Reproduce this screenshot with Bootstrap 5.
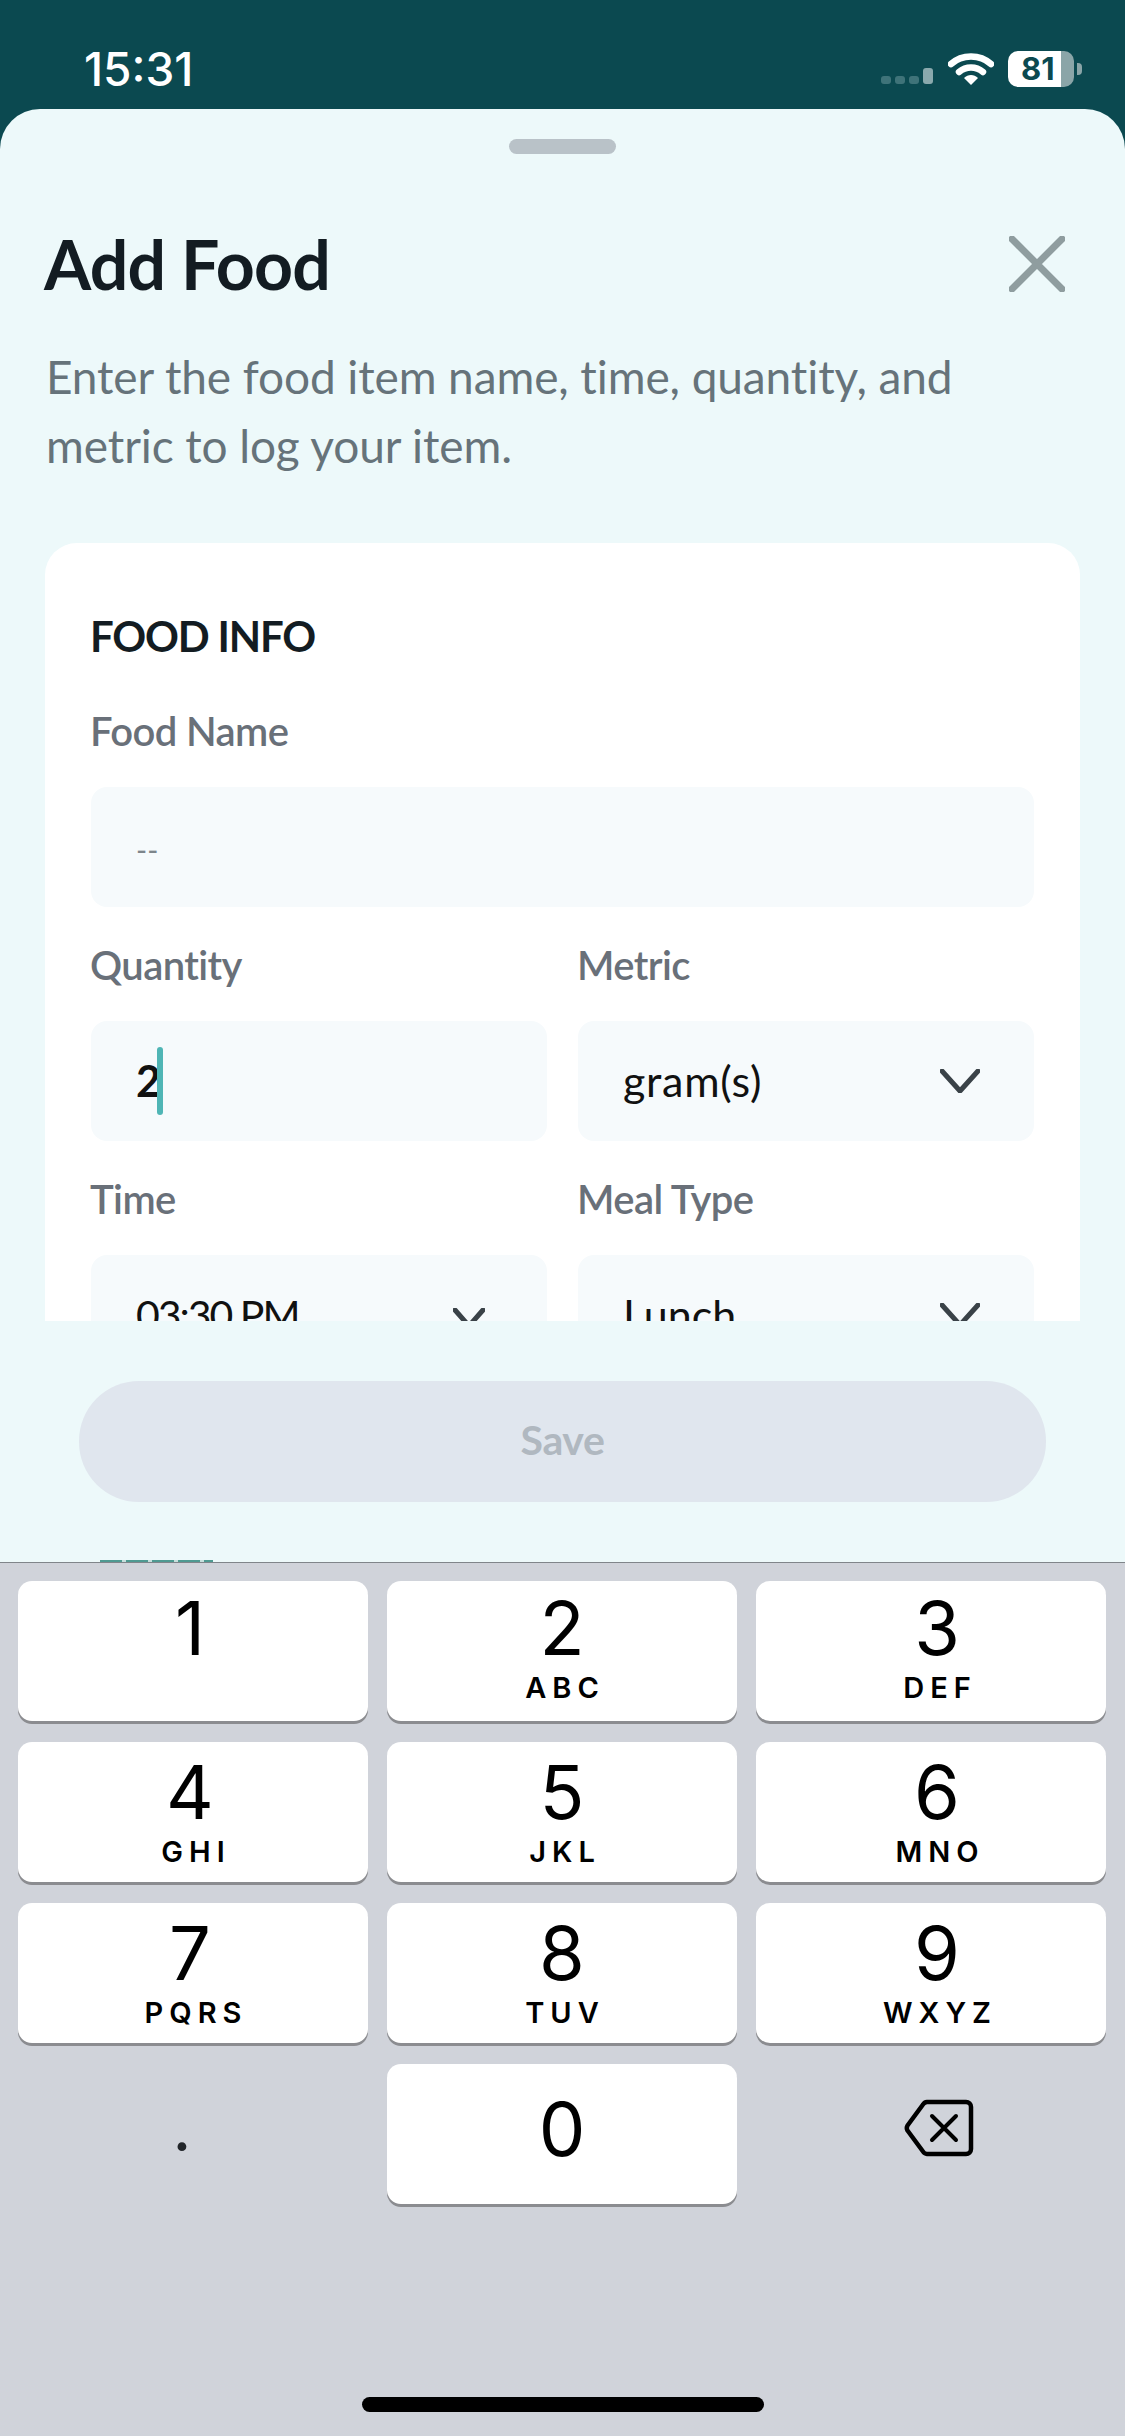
<!DOCTYPE html>
<html lang="en">
<head>
  <meta charset="UTF-8" />
  <title>Add Food</title>
  <link href="https://cdn.jsdelivr.net/npm/bootstrap@5.3.3/dist/css/bootstrap.min.css" rel="stylesheet">
  <style>
    html, body { margin: 0; width: 1125px; height: 2436px; overflow: hidden; background: #0b4950; }
    body { font-family: "Lato", "Noto Sans", sans-serif; }

    .status-area { height: 109px; padding: 0 43px 0 84px; color: #fff; }
    .clock { font-family: "Inter", sans-serif; font-size: 46px; font-weight: 500; line-height: 32px; margin-top: 53px; }
    .status-icons { margin-top: 51px; height: 36px; }
    .signal-dot { width: 10px; height: 8px; border-radius: 3px; background: #3f7379; }
    .signal-tall { height: 16px; background: #8aa9ad; }
    .signal-wrap { gap: 4px; margin: 0 15px 3px 0; }
    .wifi-glyph { margin-top: 1px; }
    .battery { width: 66px; height: 36px; border-radius: 10px; margin-left: 14px; background: linear-gradient(90deg, #fff 53px, #8aa5a8 53px); color: #0b4950; font-family: "Inter", sans-serif; font-weight: 700; font-size: 31px; line-height: 36px; padding-left: 13px; }
    .battery-nub { width: 5px; height: 12px; margin: 12px 0 0 3px; border-radius: 0 4px 4px 0; background: #8aa5a8; }

    .sheet { height: 1453px; background: #edf9fa; border-radius: 40px 40px 0 0; }
    .sheet-scroll { height: 1212px; overflow: hidden; }
    .grabber { width: 107px; height: 15px; margin: 30px auto 0; border-radius: 8px; background: #b9c2c8; }
    .title-row { margin: 70px 60px 0 44px; height: 80px; }
    .sheet-title { font-size: 68px; line-height: 80px; font-weight: 700; letter-spacing: -0.8px; color: #131c22; margin: 0; }
    .sheet-intro { margin: 38px 60px 63px 46px; font-size: 46px; line-height: 69px; letter-spacing: -0.1px; color: #66737a; }

    .food-card { margin: 0 45px; padding: 63px 46px 40px; background: #fff; border-radius: 32px; }
    .food-heading { font-size: 42px; line-height: 60px; font-weight: 700; letter-spacing: -1.2px; color: #131c22; margin: 0 0 40px -1px; }
    .field-label { display: block; font-size: 40px; line-height: 50px; font-weight: 600; letter-spacing: -0.6px; color: #697079; margin: 0 0 31px -1px; }
    .field-box { height: 120px; padding: 0 54px 0 45px; background: #f6fafc; border-radius: 16px; margin-bottom: 33px; font-size: 43px; color: #111; }
    .field-row { --bs-gutter-x: 31px; }
    .field-hint { font-size: 30px; padding-top: 4px; color: #7d858b; }
    .qty-value { font-weight: 700; }
    .text-caret { width: 6px; height: 68px; margin-left: -4px; border-radius: 3px; background: #4fb5b5; }
    .value-wide { letter-spacing: 0.7px; }
    .value-tight { font-size: 41px; letter-spacing: -2px; }
    .box-time { padding-right: 62px; }
    .chevron-low { margin-top: 6px; }

    .sheet-footer { height: 241px; padding-top: 60px; }
    .save-btn { display: block; width: 967px; height: 121px; margin-left: 79px; padding-bottom: 10px; border: 0; border-radius: 60px; font-size: 41px; font-weight: 700; letter-spacing: -0.4px; }
    .save-btn:disabled { background: #e0e6ee; color: #b0b8c0; opacity: 1; }
    .under-sliver { width: 113px; height: 2px; margin-left: 100px; background: repeating-linear-gradient(90deg, #4f9a92 0 22px, #c6e0dd 22px 26px); }

    .keypad { height: 874px; padding: 18px 19px 0 18px; background: #d0d3da; border-top: 1px solid #80858a; display: grid; grid-template-columns: repeat(3, 1fr); grid-auto-rows: 140px; gap: 21px 19px; }
    .pad-key { border-radius: 14px; background: #fff; box-shadow: 0 3px 0 #8b8c90; padding-top: 10px; color: #000; font-family: "Inter", sans-serif; }
    .pad-key:nth-child(n+4):nth-child(-n+9) { padding-top: 13px; }
    .pad-digit { font-size: 74px; line-height: 74px; font-weight: 400; }
    .pad-letters { font-size: 29px; line-height: 30px; font-weight: 600; letter-spacing: 6px; margin: 8px -6px 0 0; }
    .pad-col-left .pad-digit { margin-left: -6px; }
    .pad-col-right { padding-left: 12px; }
    .pad-zero { padding-top: 28px; }
    .pad-dot { font-family: "Inter", sans-serif; font-size: 56px; line-height: 50px; font-weight: 600; padding: 42px 0 0 155px; }
    .pad-back { padding: 35px 0 0 148px; }
    .home-bar { position: absolute; left: 362px; top: 2397px; width: 402px; height: 15px; border-radius: 8px; background: #000; }
  </style>
</head>
<body>

<div class="status-area d-flex justify-content-between">
  <div class="clock">15:31</div>
  <div class="status-icons d-flex">
    <div class="signal-wrap d-flex align-items-end">
      <span class="signal-dot"></span><span class="signal-dot"></span><span class="signal-dot"></span><span class="signal-dot signal-tall"></span>
    </div>
    <svg class="wifi-glyph" width="46" height="34" viewBox="0 0 46 34" fill="none">
      <path d="M3 12 C14 2 32 2 43 12" stroke="#fff" stroke-width="6.5" stroke-linecap="round"/>
      <path d="M11 20 C18 14 28 14 35 20" stroke="#fff" stroke-width="6.5" stroke-linecap="round"/>
      <path d="M16 26 C20 22 26 22 30 26 L23 33 Z" fill="#fff"/>
    </svg>
    <div class="battery">81</div>
    <div class="battery-nub"></div>
  </div>
</div>

<div class="sheet d-flex flex-column">
  <div class="sheet-scroll">
    <div class="grabber"></div>
    <div class="title-row d-flex justify-content-between align-items-center">
      <h1 class="sheet-title">Add Food</h1>
      <svg width="56" height="56" viewBox="0 0 56 56" fill="none">
        <path d="M3 3 L53 53 M53 3 L3 53" stroke="#8f9d9f" stroke-width="7" stroke-linecap="round"/>
      </svg>
    </div>
    <p class="sheet-intro">Enter the food item name, time, quantity, and metric to log your item.</p>

    <div class="food-card">
      <h2 class="food-heading">FOOD INFO</h2>
      <label class="field-label">Food Name</label>
      <div class="field-box d-flex align-items-center"><span class="field-hint">--</span></div>

      <div class="row field-row">
        <div class="col-6">
          <label class="field-label">Quantity</label>
          <div class="field-box d-flex align-items-center"><span class="qty-value">2</span><span class="text-caret"></span></div>
        </div>
        <div class="col-6">
          <label class="field-label">Metric</label>
          <div class="field-box d-flex align-items-center justify-content-between">
            <span class="value-wide">gram(s)</span>
            <svg width="40" height="24" viewBox="0 0 40 24" fill="none"><path d="M2 2 L20 22 L38 2" stroke="#3a4248" stroke-width="5" stroke-linecap="round" stroke-linejoin="round"/></svg>
          </div>
        </div>
        <div class="col-6">
          <label class="field-label">Time</label>
          <div class="field-box box-time d-flex align-items-center justify-content-between">
            <span class="value-tight">03:30 PM</span>
            <svg class="chevron-low" width="32" height="20" viewBox="0 0 32 20" fill="none"><path d="M2 2 L16 18 L30 2" stroke="#3a4248" stroke-width="5" stroke-linecap="round" stroke-linejoin="round"/></svg>
          </div>
        </div>
        <div class="col-6">
          <label class="field-label">Meal Type</label>
          <div class="field-box d-flex align-items-center justify-content-between">
            <span>Lunch</span>
            <svg width="40" height="24" viewBox="0 0 40 24" fill="none"><path d="M2 2 L20 22 L38 2" stroke="#3a4248" stroke-width="5" stroke-linecap="round" stroke-linejoin="round"/></svg>
          </div>
        </div>
      </div>
    </div>
  </div>

  <div class="sheet-footer d-flex flex-column">
    <button class="btn save-btn" disabled>Save</button>
    <div class="under-sliver mt-auto"></div>
  </div>
</div>

<div class="keypad">
  <div class="pad-key pad-col-left d-flex flex-column align-items-center"><div class="pad-digit">1</div></div>
  <div class="pad-key d-flex flex-column align-items-center"><div class="pad-digit">2</div><div class="pad-letters">ABC</div></div>
  <div class="pad-key pad-col-right d-flex flex-column align-items-center"><div class="pad-digit">3</div><div class="pad-letters">DEF</div></div>
  <div class="pad-key pad-col-left d-flex flex-column align-items-center"><div class="pad-digit">4</div><div class="pad-letters">GHI</div></div>
  <div class="pad-key d-flex flex-column align-items-center"><div class="pad-digit">5</div><div class="pad-letters">JKL</div></div>
  <div class="pad-key pad-col-right d-flex flex-column align-items-center"><div class="pad-digit">6</div><div class="pad-letters">MNO</div></div>
  <div class="pad-key pad-col-left d-flex flex-column align-items-center"><div class="pad-digit">7</div><div class="pad-letters">PQRS</div></div>
  <div class="pad-key d-flex flex-column align-items-center"><div class="pad-digit">8</div><div class="pad-letters">TUV</div></div>
  <div class="pad-key pad-col-right d-flex flex-column align-items-center"><div class="pad-digit">9</div><div class="pad-letters">WXYZ</div></div>
  <div class="pad-dot">.</div>
  <div class="pad-key pad-zero d-flex flex-column align-items-center"><div class="pad-digit">0</div></div>
  <div class="pad-back">
    <svg width="70" height="58" viewBox="0 0 70 58" fill="none">
      <path d="M23 3 H62 a5 5 0 0 1 5 5 V50 a5 5 0 0 1 -5 5 H23 a5 5 0 0 1 -4 -2.5 L3.5 31.5 a5 5 0 0 1 0 -5 L19 5.5 a5 5 0 0 1 4 -2.5 Z" stroke="#000" stroke-width="4.5" stroke-linejoin="round"/>
      <path d="M28 17 L52 41 M52 17 L28 41" stroke="#000" stroke-width="4" stroke-linecap="round"/>
    </svg>
  </div>
</div>
<div class="home-bar"></div>

</body>
</html>
